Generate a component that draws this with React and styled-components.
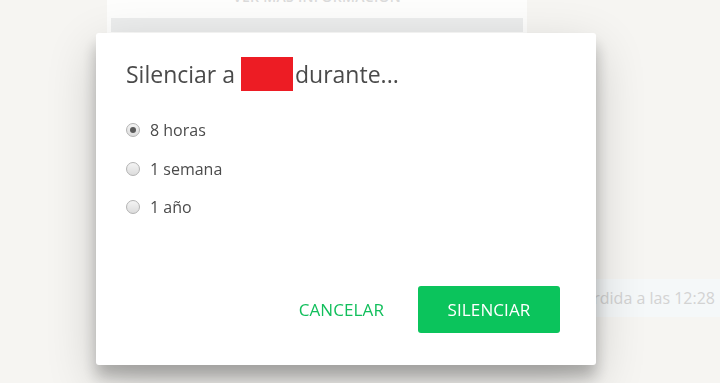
import React, { useState } from "react";
import styled, { createGlobalStyle } from "styled-components";

const GlobalStyle = createGlobalStyle`
  html, body {
    margin: 0;
    padding: 0;
    width: 720px;
    height: 383px;
    overflow: hidden;
  }
  body {
    background: #f7f6f4;
    font-family: "Open Sans", "Noto Sans", sans-serif;
  }
`;

const Chat = styled.div`
  width: 720px;
  height: 383px;
  display: flex;
  flex-direction: column;
  background: #f6f5f2;
`;

const InfoCard = styled.div`
  margin-left: 107px;
  width: 420px;
  height: 33px;
  padding: 0 4px;
  box-sizing: border-box;
  background: rgba(255, 255, 255, 0.75);
  display: flex;
  flex-direction: column;
  align-items: center;
`;

const InfoTitle = styled.div`
  line-height: 18px;
  margin: -12px 0 12px;
  font-size: 14px;
  font-weight: 600;
  color: #dadada;
  letter-spacing: 0.3px;
`;

const InfoBar = styled.div`
  align-self: stretch;
  height: 14px;
  background: #eceded;
`;

const BubbleRow = styled.div`
  margin-top: 246px;
  display: flex;
  justify-content: flex-end;
`;

const Bubble = styled.div`
  height: 38px;
  padding: 0 5px 0 12px;
  display: flex;
  align-items: center;
  background: #f5f8f9;
  color: #d3d3d3;
  font-size: 16px;
  white-space: nowrap;
`;

const Overlay = styled.div`
  position: fixed;
  inset: 0;
  padding: 33px 0 0 96px;
  box-sizing: border-box;
`;

const Dialog = styled.div`
  width: 500px;
  height: 332px;
  box-sizing: border-box;
  padding: 24px 36px 32px 30px;
  background: #fff;
  border-radius: 3px;
  box-shadow: 0 17px 50px 0 rgba(0, 0, 0, 0.19), 0 12px 15px 0 rgba(0, 0, 0, 0.24);
  display: flex;
  flex-direction: column;
`;

const Title = styled.div`
  display: flex;
  align-items: center;
  font-size: 23px;
  color: #4a4a4a;
  height: 34px;
`;

const Redacted = styled.span`
  display: inline-block;
  width: 52px;
  height: 34px;
  margin: 0 2px 0 6px;
  background: #ed1c24;
`;

const Options = styled.div`
  margin-top: 28px;
  display: flex;
  flex-direction: column;
  gap: 16.5px;
`;

const Option = styled.label`
  display: flex;
  align-items: center;
  gap: 10px;
  height: 22px;
  font-size: 16px;
  color: #4b4b4b;
  cursor: pointer;
`;

const Radio = styled.span`
  width: 14px;
  height: 14px;
  border-radius: 50%;
  box-sizing: border-box;
  border: 1px solid #b3b3b3;
  background: linear-gradient(#f4f4f4, #dcdcdc);
  display: flex;
  align-items: center;
  justify-content: center;
  &::after {
    content: "";
    width: 6px;
    height: 6px;
    border-radius: 50%;
    background: ${(p) => (p.checked ? "#5a5a5a" : "transparent")};
  }
`;

const Actions = styled.div`
  margin-top: auto;
  display: flex;
  justify-content: flex-end;
  align-items: center;
  gap: 34px;
`;

const Button = styled.button`
  height: 47px;
  border: none;
  border-radius: 3px;
  font-family: inherit;
  font-size: 17px;
  letter-spacing: 0.1px;
  cursor: pointer;
  padding: 0;
  width: ${(p) => (p.primary ? "142px" : "auto")};
  background: ${(p) => (p.primary ? "#0bc45c" : "transparent")};
  color: ${(p) => (p.primary ? "#fff" : "#12bf5c")};
`;

const options = ["8 horas", "1 semana", "1 año"];

export default function App() {
  const [choice, setChoice] = useState(0);
  return (
    <>
      <GlobalStyle />
      <Chat>
        <InfoCard>
          <InfoTitle>VER MÁS INFORMACIÓN</InfoTitle>
          <InfoBar />
        </InfoCard>
        <BubbleRow>
          <Bubble>Llamada perdida a las 12:28</Bubble>
        </BubbleRow>
      </Chat>
      <Overlay>
        <Dialog>
          <Title>
            Silenciar a <Redacted /> durante...
          </Title>
          <Options>
            {options.map((o, i) => (
              <Option key={o} onClick={() => setChoice(i)}>
                <Radio checked={choice === i} />
                {o}
              </Option>
            ))}
          </Options>
          <Actions>
            <Button>CANCELAR</Button>
            <Button primary>SILENCIAR</Button>
          </Actions>
        </Dialog>
      </Overlay>
    </>
  );
}
